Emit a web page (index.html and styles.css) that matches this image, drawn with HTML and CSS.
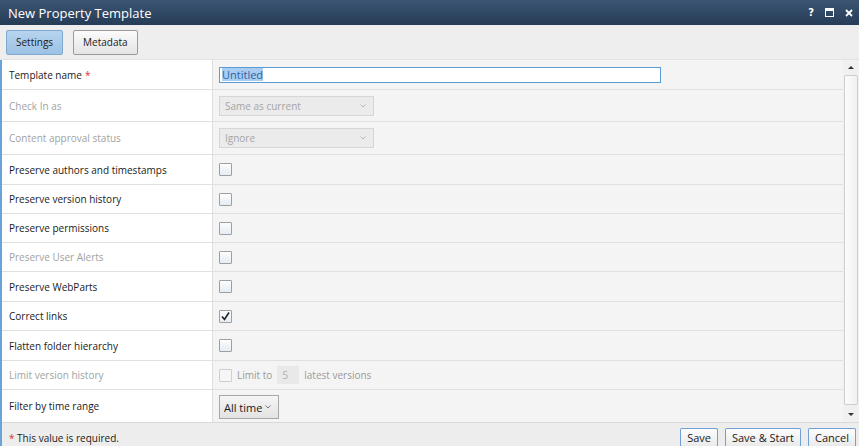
FILE: index.html
```html
<!DOCTYPE html>
<html>
<head>
<meta charset="utf-8">
<link rel="stylesheet" href="styles.css">
</head>
<body>
<div class="window">
  <div class="titlebar">
    <span class="title">New Property Template</span>
    <div class="win-ctrls">
      <span class="help">?</span>
      <svg class="ctl" width="9" height="9" viewBox="0 0 9 9"><rect x="0.5" y="0.5" width="8" height="8" fill="none" stroke="#fff" stroke-width="1"/><rect x="0.5" y="0.5" width="8" height="2.5" fill="#fff"/></svg>
      <svg class="ctl" width="8" height="8" viewBox="0 0 8 8"><path d="M1 1 L7 7 M7 1 L1 7" stroke="#fff" stroke-width="1.8"/></svg>
    </div>
  </div>
  <div class="toolbar">
    <button class="tab active">Settings</button>
    <button class="tab">Metadata</button>
  </div>
  <div class="body">
    <div class="content">
      <div class="grid">
        <div class="row h30">
          <div class="label">Template name <span class="req">*</span></div>
          <div class="value"><div class="textbox"><span class="sel">Untitled</span></div></div>
        </div>
        <div class="row h32">
          <div class="label dim">Check In as</div>
          <div class="value"><div class="select disabled"><span>Same as current</span><svg class="chev" width="6" height="4" viewBox="0 0 6 4"><path d="M0.5 0.5 L3 3 L5.5 0.5" fill="none" stroke="#b8b8b8" stroke-width="1"/></svg></div></div>
        </div>
        <div class="row h33">
          <div class="label dim">Content approval status</div>
          <div class="value"><div class="select disabled"><span>Ignore</span><svg class="chev" width="6" height="4" viewBox="0 0 6 4"><path d="M0.5 0.5 L3 3 L5.5 0.5" fill="none" stroke="#b8b8b8" stroke-width="1"/></svg></div></div>
        </div>
        <div class="row h30">
          <div class="label">Preserve authors and timestamps</div>
          <div class="value"><span class="cb"></span></div>
        </div>
        <div class="row h29">
          <div class="label">Preserve version history</div>
          <div class="value"><span class="cb"></span></div>
        </div>
        <div class="row h29">
          <div class="label">Preserve permissions</div>
          <div class="value"><span class="cb"></span></div>
        </div>
        <div class="row h29">
          <div class="label dim">Preserve User Alerts</div>
          <div class="value"><span class="cb"></span></div>
        </div>
        <div class="row h30">
          <div class="label">Preserve WebParts</div>
          <div class="value"><span class="cb"></span></div>
        </div>
        <div class="row h29">
          <div class="label">Correct links</div>
          <div class="value"><span class="cb checked"><svg width="11" height="11" viewBox="0 0 11 11"><path d="M2 5.5 L4.5 8.5 L9 1.5" fill="none" stroke="#222" stroke-width="1.6"/></svg></span></div>
        </div>
        <div class="row h30">
          <div class="label">Flatten folder hierarchy</div>
          <div class="value"><span class="cb"></span></div>
        </div>
        <div class="row h29">
          <div class="label dim">Limit version history</div>
          <div class="value limit"><span class="cb disabled"></span><span class="dimtext">Limit to</span><span class="num">5</span><span class="dimtext">latest versions</span></div>
        </div>
        <div class="row h32 last">
          <div class="label">Filter by time range</div>
          <div class="value"><div class="select normal"><span>All time</span><svg class="chev" width="6" height="4" viewBox="0 0 6 4"><path d="M0.5 0.5 L3 3 L5.5 0.5" fill="none" stroke="#777" stroke-width="1"/></svg></div></div>
        </div>
      </div>
      <div class="scrollbar">
        <span class="arrow up"></span>
        <div class="thumb"></div>
        <span class="arrow down"></span>
      </div>
    </div>
    <div class="footer">
      <span class="note"><span class="req">*</span> This value is required.</span>
      <div class="actions">
        <button class="btn">Save</button>
        <button class="btn">Save &amp; Start</button>
        <button class="btn">Cancel</button>
      </div>
    </div>
  </div>
</div>
</body>
</html>
```

FILE: styles.css
```css
* { box-sizing: border-box; }
html, body { margin: 0; padding: 0; }
body {
  width: 859px;
  height: 446px;
  overflow: hidden;
  font-family: "Open Sans", "Noto Sans", sans-serif;
  font-size: 10px;
  color: #1a1a1a;
  background: #f4f4f4;
}
.window { display: flex; flex-direction: column; height: 446px; }
.titlebar {
  height: 25px;
  flex: none;
  background: linear-gradient(#3b5572, #263c57);
  color: #fff;
  display: flex;
  align-items: center;
  justify-content: space-between;
  padding: 0 6px 0 8px;
}
.title { font-size: 13px; }
.win-ctrls { display: flex; align-items: center; gap: 11px; }
.help { font-weight: bold; font-size: 10px; font-family: "DejaVu Sans", sans-serif; }
.toolbar {
  height: 35px;
  flex: none;
  background: #eeeeee;
  display: flex;
  align-items: center;
  gap: 10px;
  padding: 0 6px;
  border-bottom: 1px solid #e2e2e2;
}
.tab {
  height: 25px;
  padding: 0 9px;
  font: inherit;
  font-size: 10px;
  color: #1a1a1a;
  border: 1px solid #9a9a9a;
  border-radius: 2px;
  background: linear-gradient(#fbfbfb, #e4e4e4);
}
.tab.active {
  background: linear-gradient(#b6d4ee, #9cc2e5);
  border-color: #7fa9cf;
}
.body {
  flex: 1;
  display: flex;
  flex-direction: column;
  border-left: 2px solid #6aa3d8;
}
.content { flex: 1; display: flex; }
.grid { flex: 1; display: flex; flex-direction: column; }
.row { display: grid; grid-template-columns: 211px 1fr; border-bottom: 1px solid #e0e0e0; }
.row.last { border-bottom: none; }
.h29 { height: 29px; }
.h30 { height: 30px; }
.h32 { height: 32px; }
.h33 { height: 33px; }
.label {
  background: #fff;
  border-right: 1px solid #dedede;
  display: flex;
  align-items: center;
  padding-left: 7px;
  white-space: nowrap;
}
.label.dim { color: #a2a2a2; }
.req { color: #e03030; margin-left: 3px; }
.note .req { margin-left: 0; }
.value {
  display: flex;
  align-items: center;
  padding-left: 6px;
  background: #f4f4f4;
  white-space: nowrap;
}
.textbox {
  width: 442px;
  height: 16px;
  border: 1px solid #5b9bd5;
  background: #fff;
  display: flex;
  align-items: center;
  padding-left: 2px;
  font-size: 11px;
}
.sel { background: #a9cdf0; color: #2d62a5; line-height: 13px; }
.select {
  display: flex;
  align-items: center;
  justify-content: space-between;
  height: 20px;
  padding: 0 7px 0 5px;
}
.select.disabled {
  width: 155px;
  background: #ebebeb;
  border: 1px solid #d6d6d6;
  color: #a5a5a5;
}
.select.normal {
  width: 60px;
  height: 24px;
  background: linear-gradient(#f5f5f5, #e3e3e3);
  border: 1px solid #a8a8a8;
  color: #1a1a1a;
  font-size: 11px;
  margin-top: 2px;
  padding: 0 7px 0 4px;
}
.chev { display: block; flex: none; }
.cb {
  width: 13px;
  height: 13px;
  border: 1px solid #9f9f9f;
  border-radius: 1px;
  background: linear-gradient(#fdfdfd, #e4ecf4);
  display: inline-flex;
  align-items: center;
  justify-content: center;
}
.cb.disabled { border-color: #cfcfcf; background: #f6f6f6; }
.limit { gap: 5px; }
.dimtext { color: #9a9a9a; font-size: 10px; }
.num {
  width: 22px;
  height: 18px;
  background: #e9e9e9;
  color: #b0b0b0;
  display: inline-flex;
  align-items: center;
  padding-left: 5px;
  font-size: 10.5px;
}
.scrollbar {
  width: 16px;
  flex: none;
  background: #f0f0f0;
  display: flex;
  flex-direction: column;
  align-items: center;
  padding: 6px 0 6px;
}
.arrow { width: 0; height: 0; border-left: 3px solid transparent; border-right: 3px solid transparent; }
.arrow.up { border-bottom: 3px solid #333; margin-bottom: 6px; }
.arrow.down { border-top: 3px solid #333; margin-top: 8px; }
.thumb {
  width: 14px;
  flex: 1;
  background: linear-gradient(90deg, #fcfcfc, #f0f0f0);
  border: 1px solid #cfcfcf;
  border-radius: 2px;
}
.footer {
  height: 24px;
  flex: none;
  background: #ededed;
  border-top: 1px solid #d9d9d9;
  display: flex;
  justify-content: space-between;
  align-items: flex-end;
  padding-left: 7px;
  padding-right: 3px;
}
.note { font-size: 10px; padding-bottom: 1px; }
.actions { display: flex; gap: 7px; }
.btn {
  height: 18px;
  padding: 0 6px;
  font: inherit;
  font-size: 11px;
  color: #1a1a1a;
  background: linear-gradient(#fdfdfd, #eaeaea);
  border: 1px solid #6f9fd6;
  border-bottom: none;
  border-radius: 2px 2px 0 0;
}
```
